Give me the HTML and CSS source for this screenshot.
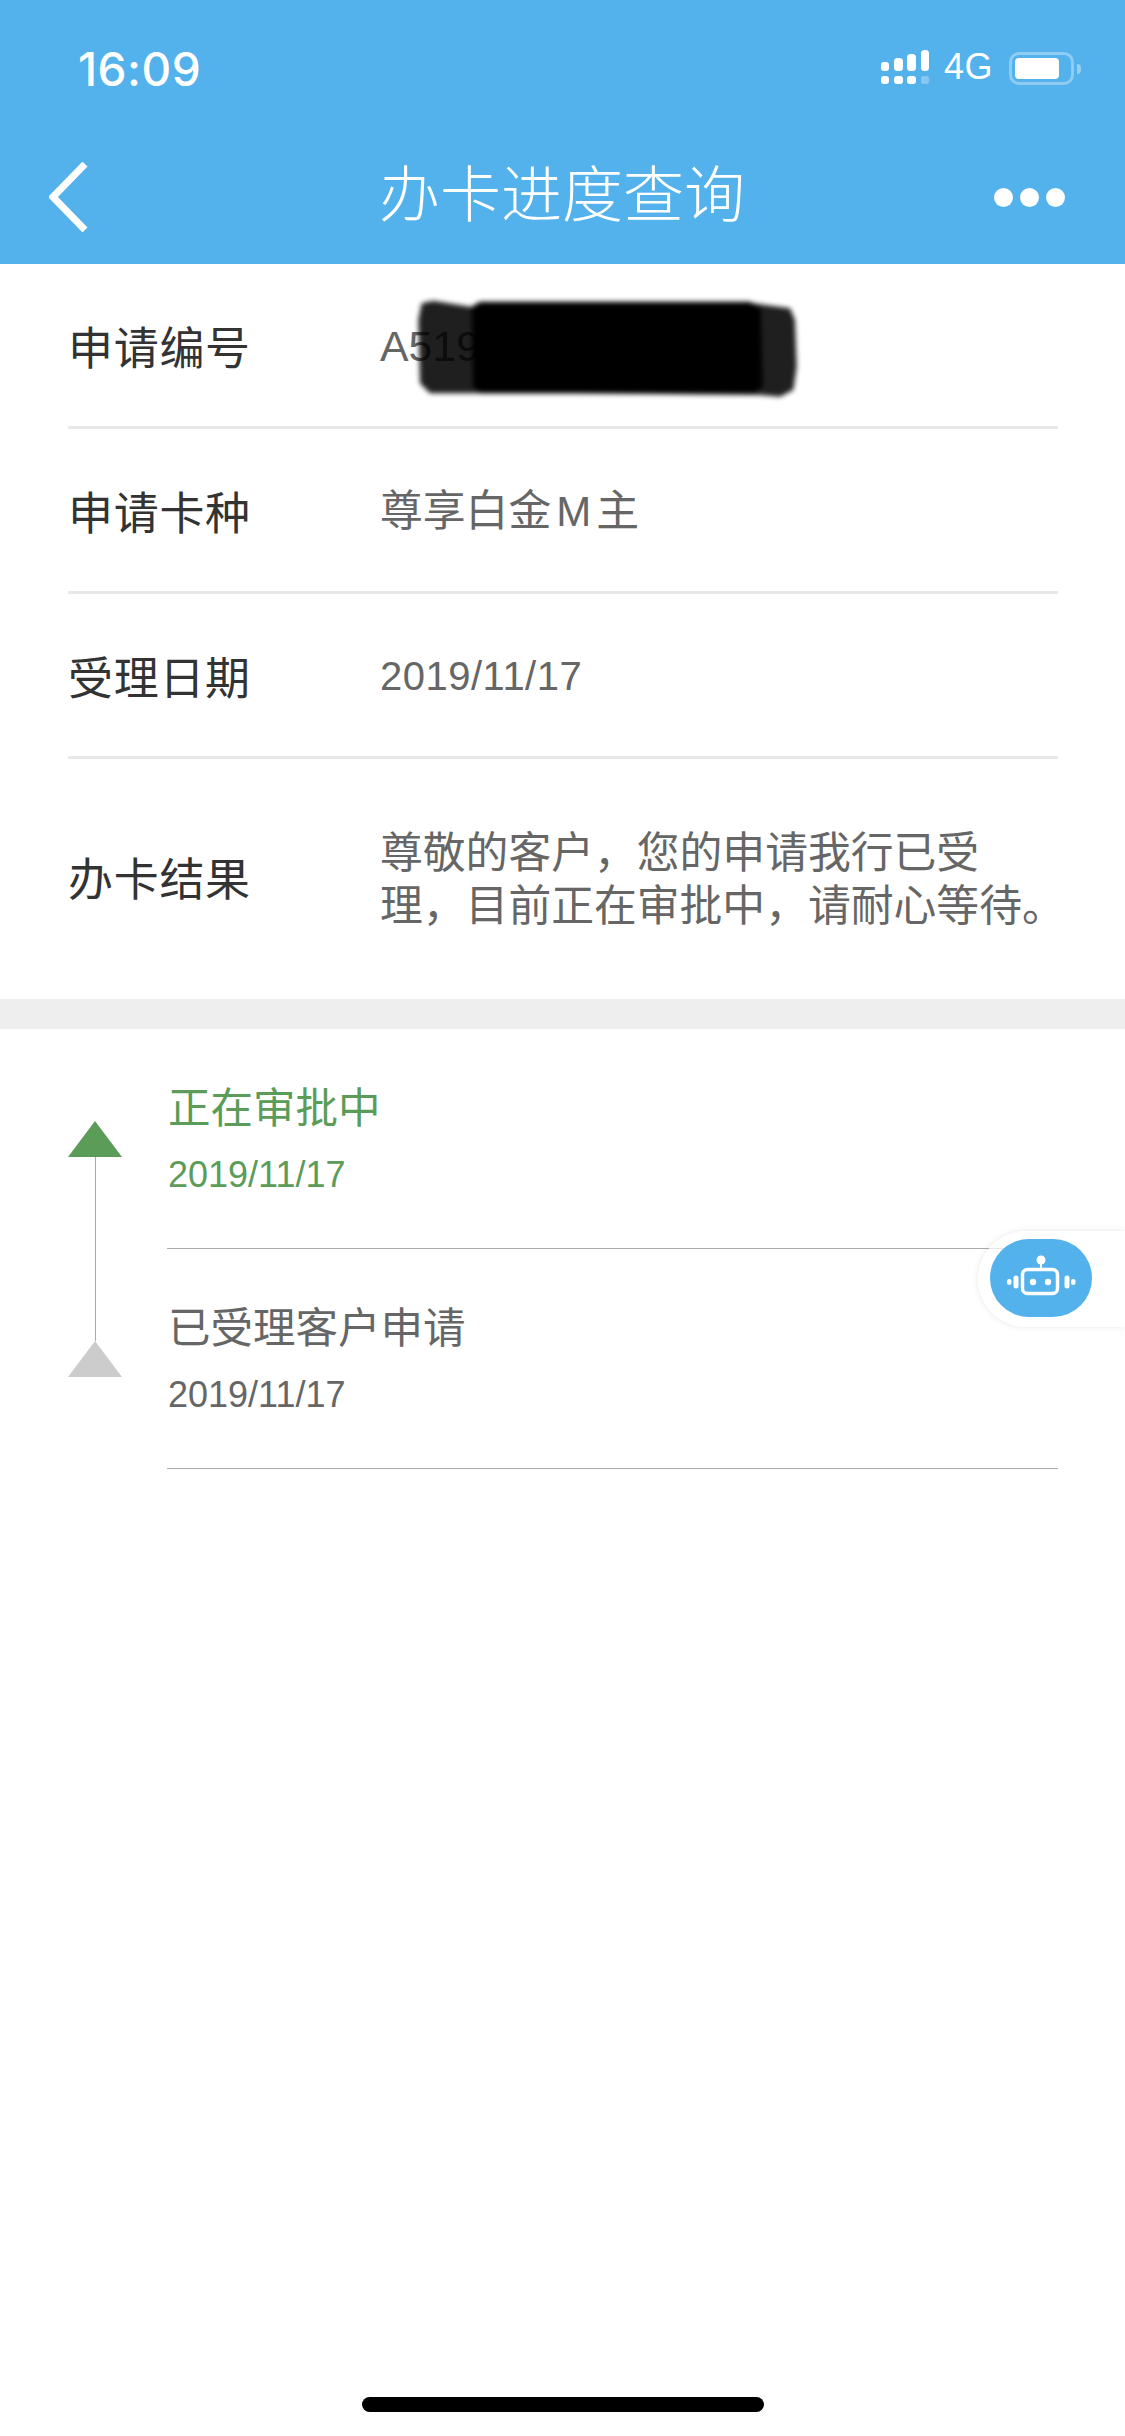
FILE: index.html
```html
<!DOCTYPE html>
<html>
<head>
  <meta charset="UTF-8"/>
  <title>办卡进度查询</title>
  <link rel="stylesheet" href="styles.css">
</head>
<body>
<div class="page">
  <div class="header">
    <div class="statusbar">
      <span class="time">16:09</span>
      <div class="status-icons">
        <svg class="signal" width="48" height="35" viewBox="0 0 48 35">
          <g fill="#fff">
            <rect x="0" y="12" width="8" height="9" rx="3"/>
            <rect x="13" y="8" width="9" height="13" rx="3.5"/>
            <rect x="26" y="4" width="9" height="17" rx="3.5"/>
            <rect x="40" y="0" width="8" height="21" rx="3.5"/>
            <rect x="0" y="26" width="8" height="8" rx="3"/>
            <rect x="13" y="26" width="9" height="8" rx="3"/>
            <rect x="26" y="26" width="9" height="8" rx="3"/>
            <rect x="40" y="26" width="8" height="8" rx="3" opacity="0.3"/>
          </g>
        </svg>
        <span class="net">4G</span>
        <div class="battery">
          <div class="battery-body"><div class="battery-fill"></div></div>
          <div class="battery-nub"></div>
        </div>
      </div>
    </div>
    <div class="navbar">
      <svg class="back" width="39" height="70" viewBox="0 0 39 70">
        <path d="M36 2 L4 35 L36 68" fill="none" stroke="#fff" stroke-width="7"/>
      </svg>
      <div class="nav-title">办卡进度查询</div>
      <div class="more"><i></i><i></i><i></i></div>
    </div>
  </div>

  <div class="info">
    <div class="row">
      <div class="label">申请编号</div>
      <div class="value">A519</div>
      <!-- hand-drawn redaction over the number -->
      <svg class="scribble" width="480" height="140" viewBox="0 0 1440 420">
        <path class="scribble-wide" d="M245 70 L280 62 L390 80 L1240 70 L1350 85 L1365 120 L1370 260 L1360 330 L1320 350 L1260 345 L700 340 L270 340 L240 310 L235 120 Z"/>
        <path class="scribble-core" d="M395 80 L420 65 L1230 65 L1262 85 L1268 320 L1240 340 L420 340 L400 320 Z"/>
      </svg>
    </div>
    <div class="row">
      <div class="label">申请卡种</div>
      <div class="value">尊享白金<span class="letter">M</span>主</div>
    </div>
    <div class="row">
      <div class="label">受理日期</div>
      <div class="value date">2019/11/17</div>
    </div>
    <div class="row row-result">
      <div class="label">办卡结果</div>
      <div class="value">尊敬的客户，您的申请我行已受<br>理，目前正在审批中，请耐心等待。</div>
    </div>
  </div>

  <div class="band"></div>

  <div class="progress">
    <div class="track">
      <div class="tri tri-green"></div>
      <div class="track-line"></div>
      <div class="tri tri-gray"></div>
    </div>
    <div class="steps">
      <div class="step step-active">
        <div class="step-title">正在审批中</div>
        <div class="step-date">2019/11/17</div>
      </div>
      <div class="step">
        <div class="step-title">已受理客户申请</div>
        <div class="step-date">2019/11/17</div>
      </div>
    </div>
  </div>

  <div class="home-bar"></div>

  <div class="robot">
    <div class="robot-pill">
      <svg width="72" height="48" viewBox="0 0 72 48">
        <circle cx="36" cy="6" r="4.5" fill="#fff"/>
        <path d="M36 9 V14" stroke="#fff" stroke-width="2"/>
        <rect x="17.5" y="15.5" width="35" height="24" rx="5" fill="none" stroke="#fff" stroke-width="3.5"/>
        <circle cx="28" cy="28" r="3.2" fill="#fff"/>
        <circle cx="43" cy="28" r="3.2" fill="#fff"/>
        <rect x="8.5" y="21.5" width="5" height="13" rx="2.5" fill="#fff"/>
        <rect x="2" y="25" width="4.5" height="6" rx="2.2" fill="#fff"/>
        <rect x="59.5" y="21.5" width="5" height="13" rx="2.5" fill="#fff"/>
        <rect x="66" y="25" width="4.5" height="6" rx="2.2" fill="#fff"/>
      </svg>
    </div>
  </div>
</div>
</body>
</html>
```
FILE: styles.css
```css
html, body{
  margin: 0;
  padding: 0;
}
body{
  background-color: #fff;
  font-family: "Liberation Sans", "Noto Sans CJK SC", sans-serif;
}
.page{
  position: relative;
  display: flex;
  flex-direction: column;
  width: 1125px;
  height: 2436px;
  overflow: hidden;
}

/* header */
.header{
  height: 264px;
  background-color: #53b1ec;
  color: #fff;
}
.statusbar{
  display: flex;
  justify-content: space-between;
  align-items: flex-start;
  height: 132px;
  padding: 0 44px 0 78px;
}
.time{
  margin-top: 46px;
  font-family: Inter, "Liberation Sans", sans-serif;
  font-size: 46px;
  line-height: 46px;
  letter-spacing: 0.5px;
  font-weight: 500;
}
.status-icons{
  display: flex;
  align-items: flex-start;
  margin-top: 50px;
}
.signal{
  margin: 0 15px 0 0;
}
.net{
  font-family: "Liberation Sans", sans-serif;
  font-size: 36px;
  line-height: 34px;
  letter-spacing: 0.5px;
  margin-right: 16px;
}
.battery{
  display: flex;
  align-items: center;
  margin-top: 2px;
}
.battery-body{
  box-sizing: border-box;
  width: 65px;
  height: 33px;
  padding: 3px;
  border: 3px solid rgba(255,255,255,0.35);
  border-radius: 10px;
}
.battery-fill{
  width: 44px;
  height: 21px;
  background-color: #fff;
  border-radius: 4px;
}
.battery-nub{
  width: 4px;
  height: 10px;
  margin-left: 3px;
  background-color: rgba(255,255,255,0.4);
  border-radius: 0 4px 4px 0;
}
.navbar{
  display: flex;
  justify-content: space-between;
  align-items: center;
  height: 132px;
  padding: 0 60px 2px 49px;
  box-sizing: border-box;
}
.nav-title{
  font-size: 61px;
  line-height: 70px;
  margin: 0 0 2px 42px;
  font-weight: 300;
}
.more{
  display: flex;
  gap: 7px;
}
.more i{
  display: block;
  width: 19px;
  height: 19px;
  border-radius: 50%;
  background-color: #fff;
}

/* info rows */
.info{
  padding: 0 67px 0 68px;
}
.row{
  position: relative;
  box-sizing: border-box;
  display: flex;
  align-items: center;
  height: 165px;
  border-bottom: 3px solid #e8e8e8;
}
.row-result{
  height: 240px;
  border-bottom: 0;
}
.row-result .label{
  padding-bottom: 5px;
}
.label{
  width: 312px;
  flex-shrink: 0;
  font-size: 45px;
  letter-spacing: 0.7px;
  color: #333;
}
.value{
  flex-shrink: 0;
  padding-top: 2px;
  font-size: 42.8px;
  line-height: 53px;
  white-space: nowrap;
  color: #666;
}
.date{
  font-size: 40px;
  letter-spacing: 0.5px;
}
.letter{
  display: inline-block;
  width: 45px;
  text-align: center;
  font-size: 42px;
}
/* blur on the whole svg, chrome ignores css filter on inner paths */
.scribble{
  position: absolute;
  left: 272px;
  top: 16px;
  filter: blur(2.5px);
}
.scribble-wide{
  fill: #000;
  opacity: 0.88;
}
.scribble-core{
  fill: #000;
}
.band{
  height: 30px;
  background-color: #eee;
}

/* timeline */
.progress{
  display: flex;
  padding: 0 67px 0 68px;
}
.track{
  display: flex;
  flex-direction: column;
  align-items: center;
  width: 54px;
  margin-right: 45px;
  padding-top: 92px;
}
.tri{
  width: 0;
  height: 0;
  border-left: 27px solid transparent;
  border-right: 27px solid transparent;
}
.tri-green{
  border-bottom: 36px solid #5b9c58;
}
.tri-gray{
  border-bottom: 36px solid #ccc;
}
.track-line{
  width: 1px;
  height: 184px;
  background-color: #aaa;
}
.steps{
  flex: 1;
}
.step{
  box-sizing: border-box;
  height: 220px;
  padding-top: 54px;
  color: #666;
  border-bottom: 1px solid #aaa;
}
.step-active{
  color: #5b9c58;
}
.step-title{
  font-size: 42.5px;
  line-height: 52px;
  padding-left: 1px;
}
.step-date{
  margin-top: 19px;
  font-size: 36px;
  line-height: 42px;
  padding-left: 1px;
}

/* home indicator */
.home-bar{
  width: 402px;
  height: 15px;
  margin: auto auto 24px;
  background-color: #000;
  border-radius: 8px;
}

/* floating robot button */
.robot{
  position: absolute;
  right: 0;
  top: 1231px;
  box-sizing: border-box;
  width: 147px;
  height: 96px;
  padding: 8px 0 0 12px;
  background-color: rgba(255,255,255,0.7);
  border-radius: 48px 0 0 48px;
  box-shadow: 0 0 6px rgba(0,0,0,0.1);
}
.robot-pill{
  display: flex;
  justify-content: center;
  align-items: center;
  width: 102px;
  height: 78px;
  background-color: #53b1ec;
  border-radius: 39px;
}
```
